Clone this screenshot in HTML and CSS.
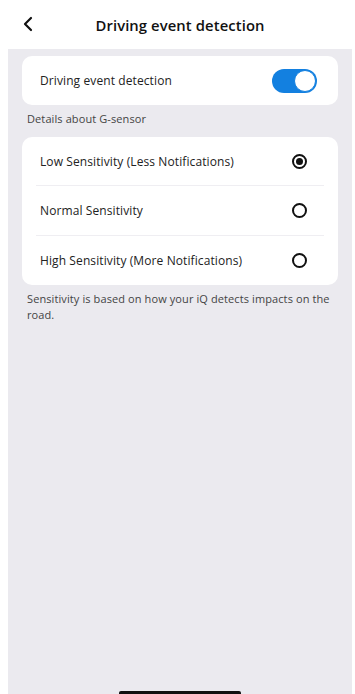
FILE: index.html
```html
<!DOCTYPE html>
<html>
<head>
<meta charset="utf-8">
<link rel="stylesheet" href="styles.css">
</head>
<body>
<div class="screen">
  <header class="topbar">
    <svg class="back" width="12" height="16" viewBox="0 0 12 16"><path d="M9 2 L3 8 L9 14" fill="none" stroke="#111" stroke-width="2.2" stroke-linecap="round" stroke-linejoin="round"/></svg>
    <h1 class="title">Driving event detection</h1>
  </header>
  <main class="panel">
    <section class="card toggle-card">
      <span class="label">Driving event detection</span>
      <span class="switch"><span class="knob"></span></span>
    </section>
    <p class="hint">Details about G-sensor</p>
    <section class="card list">
      <div class="row"><span class="label">Low Sensitivity (Less Notifications)</span><span class="radio on"></span></div>
      <div class="row"><span class="label">Normal Sensitivity</span><span class="radio"></span></div>
      <div class="row"><span class="label">High Sensitivity (More Notifications)</span><span class="radio"></span></div>
    </section>
    <p class="note">Sensitivity is based on how your iQ detects impacts on the road.</p>
  </main>
  <div class="home"></div>
</div>
</body>
</html>
```
FILE: styles.css
```css
* { box-sizing: border-box; }
html, body { margin: 0; padding: 0; background: #fff; }
body { font-family: "Open Sans", "Liberation Sans", sans-serif; color: #222; }
.screen { position: relative; width: 355px; height: 694px; overflow: hidden; display: flex; flex-direction: column; }
.topbar { height: 49px; display: flex; align-items: center; position: relative; }
.back { position: absolute; left: 22px; top: 16px; }
.title { margin: 0; width: 100%; text-align: center; font-size: 14.8px; font-weight: 600; color: #111; padding-left: 5px; letter-spacing: 0.1px; }
.panel { flex: 1; margin: 0 3px 0 8px; background: #ebeaef; padding: 7px 14px 0 14px; }
.card { background: #fff; border-radius: 10px; }
.toggle-card { height: 49px; display: flex; align-items: center; justify-content: space-between; padding: 0 21px 0 18px; }
.label { font-size: 12px; color: #222; letter-spacing: 0.1px; }
.switch { width: 45px; height: 24px; border-radius: 12px; background: #1380e0; position: relative; display: block; }
.knob { position: absolute; right: 1px; top: 1px; width: 22px; height: 22px; border-radius: 50%; background: #fff; border: 1px solid #1380e0; }
.hint { margin: 0 0 6px 0; height: 26px; display: flex; align-items: center; padding-left: 5px; font-size: 11px; color: #444; letter-spacing: 0.1px; }
.list { padding: 0 14px; }
.row { height: 49px; display: flex; align-items: center; justify-content: space-between; padding: 0 17px 0 4px; border-bottom: 1px solid #efeef2; }
.row:nth-child(2) { height: 50px; }
.row:last-child { border-bottom: none; }
.radio { width: 15px; height: 15px; border-radius: 50%; border: 2px solid #111; display: block; position: relative; }
.radio.on::after { content: ""; position: absolute; left: 2px; top: 2px; width: 7px; height: 7px; border-radius: 50%; background: #111; }
.note { margin: 6px 0 0 0; padding: 0 0 0 5px; font-size: 11px; line-height: 16px; color: #444; letter-spacing: 0.1px; }
.home { position: absolute; left: 119px; bottom: 0; width: 122px; height: 3px; background: #111; border-radius: 2px 2px 0 0; }
```
